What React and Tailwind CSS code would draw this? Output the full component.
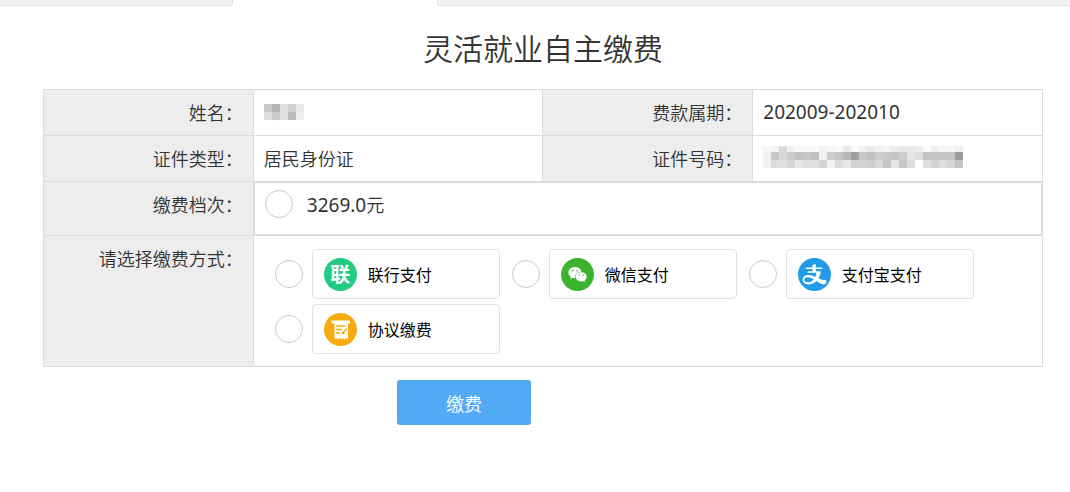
import { useState } from 'react';
import { AiFillAlipayCircle, AiFillWechat } from 'react-icons/ai';

// grey levels of the masked values, one array per row of blocks
const maskedName = [
  [200, 181, 222, 208, 232],
  [220, 203, 224, 187, 238],
  [255, 252, 255, 255, 255],
];

const maskedId = [
  [247, 242, 220, 242, 250, 250, 250, 241, 246, 250, 233, 250, 241, 233, 241, 244, 236, 232, 232, 238, 250, 238, 245, 245, 238],
  [241, 199, 214, 203, 196, 200, 192, 241, 204, 197, 184, 160, 199, 192, 204, 201, 197, 207, 230, 222, 197, 197, 197, 197, 155],
  [241, 222, 222, 215, 230, 222, 222, 210, 241, 222, 230, 210, 210, 206, 217, 197, 230, 200, 220, 255, 222, 210, 222, 213, 197],
];

// cut: how many pixels of the first row of blocks are hidden
function Masked({ rows, label, cut = 0, className }) {
  const width = rows[0].length * 8;
  const height = rows.length * 8 - cut;

  return (
    <svg
      role="img"
      aria-label={label}
      width={width}
      height={height}
      viewBox={`0 ${cut} ${width} ${height}`}
      shapeRendering="crispEdges"
      className={className}
    >
      {rows.map((row, y) =>
        row.map((g, x) => (
          <rect key={`${x}-${y}`} x={x * 8} y={y * 8} width="8" height="8" fill={`rgb(${g},${g},${g})`} />
        ))
      )}
    </svg>
  );
}

function AgreementIcon() {
  return (
    <svg viewBox="0 0 33 33" className="size-[33px]" aria-hidden="true">
      <circle cx="16.5" cy="16.5" r="16.5" fill="#f6ab0c" />
      <path
        fill="#fff"
        d="M7.5 7.5h18.5v3h-2V26.500l-1.700-1.500-1.700 1.500-1.700-1.500-1.700 1.500-1.700-1.500-1.700 1.500-1.700-1.500-1.600 1.500V10.500H7.500z"
      />
      <path
        fill="none"
        stroke="#f6ab0c"
        strokeWidth="1.500"
        strokeLinecap="round"
        d="M12.500 13h8.500M12.500 16.500h5M12.500 20h3M18 20.500l4.500-4.500M18 20.500h2"
      />
    </svg>
  );
}

const payMethods = [
  {
    id: 'union',
    name: '联行支付',
    icon: (
      <span
        aria-hidden="true"
        className="flex size-[33px] items-center justify-center rounded-full bg-[#20cb83] text-xl leading-none font-bold text-white"
      >
        联
      </span>
    ),
  },
  {
    id: 'wechat',
    name: '微信支付',
    icon: (
      <span className="flex size-[33px] items-center justify-center rounded-full bg-[#3cb22e]">
        <AiFillWechat size={21} className="text-white" />
      </span>
    ),
  },
  {
    id: 'alipay',
    name: '支付宝支付',
    icon: <AiFillAlipayCircle viewBox="64 64 896 896" size={33} className="text-[#229ae6]" />,
  },
  {
    id: 'agreement',
    name: '协议缴费',
    icon: <AgreementIcon />,
  },
];

const radioClass =
  'size-7 shrink-0 appearance-none rounded-full border border-[#d0ccc6] bg-white checked:border-8 checked:border-[#53aaf4]';
const thClass =
  'border border-[#dcdcdc] bg-[#ededed] px-[10px] pt-[10px] pb-[11px] text-right align-top font-[350]';
const tdClass = 'border border-[#dcdcdc] px-[10px] pt-[10px] pb-[11px] text-left align-top';

export default function App() {
  const [level, setLevel] = useState('');
  const [method, setMethod] = useState('');

  return (
    <div className="bg-white font-['Noto_Sans_CJK_SC',sans-serif] text-[#333]">
      {/* Bottom edge of the tab bar */}
      <div className="flex h-[6px]">
        <div className="w-[233px] rounded-br-xs border-r border-b border-[#e2e2e2] bg-[#f1f1f1]" />
        <div className="w-[204px]" />
        <div className="flex-1 rounded-bl-xs border-b border-l border-[#e2e2e2] bg-[#f1f1f1]" />
      </div>

      <main className="pt-[19px] pr-[27px] pb-16 pl-[43px]">
        <h1 className="mb-[19px] text-center text-[30px] leading-[45px] font-[350]">
          灵活就业自主缴费
        </h1>

        <table className="w-full table-fixed border-collapse text-lg leading-6 font-[350]">
          <colgroup>
            <col className="w-[21%]" />
            <col className="w-[29%]" />
            <col className="w-[21%]" />
            <col className="w-[29%]" />
          </colgroup>
          <tbody>
            <tr>
              <th scope="row" className={thClass}>姓名：</th>
              <td className={tdClass}>
                <Masked rows={maskedName} label="姓名" className="mt-1 -mb-1" />
              </td>
              <th scope="row" className={thClass}>费款属期：</th>
              <td className={`${tdClass} font-['Noto_Sans',sans-serif] text-[19px] font-normal`}>
                202009-202010
              </td>
            </tr>
            <tr>
              <th scope="row" className={thClass}>证件类型：</th>
              <td className={tdClass}>居民身份证</td>
              <th scope="row" className={thClass}>证件号码：</th>
              <td className={tdClass}>
                <Masked rows={maskedId} label="证件号码" cut={2} />
              </td>
            </tr>
            <tr>
              <th scope="row" className={thClass}>缴费档次：</th>
              <td colSpan={3} className="border border-[#dcdcdc] p-0 align-top">
                <div className="flex items-center gap-[14px] border border-[#dcdcdc] px-[10px] pt-[7px] pb-4">
                  <input
                    id="level"
                    type="radio"
                    name="level"
                    value="3269.0"
                    checked={level === '3269.0'}
                    onChange={(e) => setLevel(e.target.value)}
                    className={radioClass}
                  />
                  <label htmlFor="level">
                    <span className="font-['Noto_Sans',sans-serif] text-[19px] font-normal">3269.0</span>元
                  </label>
                </div>
              </td>
            </tr>
            <tr>
              <th scope="row" className={thClass}>请选择缴费方式：</th>
              <td colSpan={3} className="border border-[#dcdcdc] pt-[13px] pr-5 pb-3 pl-[21px] align-top">
                <div className="flex flex-wrap gap-x-3 gap-y-[5px]">
                  {payMethods.map((item) => (
                    <div key={item.id} className="flex items-center gap-[9px]">
                      <input
                        id={item.id}
                        type="radio"
                        name="method"
                        value={item.id}
                        checked={method === item.id}
                        onChange={(e) => setMethod(e.target.value)}
                        className={radioClass}
                      />
                      <label
                        htmlFor={item.id}
                        className="flex h-[50px] w-[188px] items-center gap-[11px] rounded border border-[#e2e2e2] px-[11px] text-base font-normal text-black"
                      >
                        {item.icon}
                        {item.name}
                      </label>
                    </div>
                  ))}
                </div>
              </td>
            </tr>
          </tbody>
        </table>

        <div className="mt-[13px] flex justify-center pr-[158px]">
          <button
            type="button"
            className="h-[45px] w-[134px] rounded-[3px] bg-[#53aaf4] text-lg font-[350] text-white"
          >
            缴费
          </button>
        </div>
      </main>
    </div>
  );
}
